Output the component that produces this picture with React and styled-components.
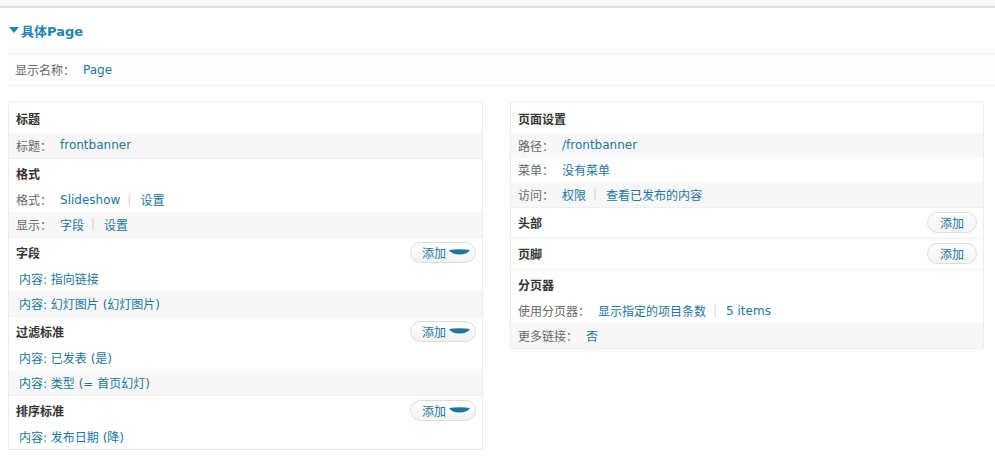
import React from "react";
import styled, { createGlobalStyle } from "styled-components";

const GlobalStyle = createGlobalStyle`
  html, body {
    margin: 0;
    padding: 0;
    background: #fff;
    font-family: "DejaVu Sans", "Noto Sans CJK SC", sans-serif;
    font-size: 12px;
    color: #333;
    overflow: hidden;
  }
`;

const blue = "#21759b";

const Page = styled.div`
  width: 1010px;
`;

const TopStrip = styled.div`
  height: 6px;
  background: #f7f7f7;
  border-bottom: 2px solid #dcdcdc;
`;

const Title = styled.h2`
  display: flex;
  align-items: center;
  gap: 2px;
  margin: 13px 0 14px 9px;
  height: 18px;
  font-size: 13px;
  font-weight: bold;
  color: #2583ad;
`;

const DisplayBox = styled.div`
  margin-left: 8px;
  height: 31px;
  display: flex;
  align-items: center;
  padding-left: 7px;
  border-top: 1px solid #efefef;
  border-bottom: 1px solid #efefef;
  background: #fdfdfd;
`;

const Columns = styled.div`
  display: grid;
  grid-template-columns: 475px 474px;
  column-gap: 27px;
  align-items: start;
  margin: 16px 0 0 8px;
`;

const Panel = styled.div`
  border: 1px solid #ececec;
  border-top-color: #f2f2f2;
`;

const Heading = styled.div`
  height: ${(p) => (p.$tall ? 31 : 30)}px;
  box-sizing: border-box;
  display: flex;
  align-items: center;
  justify-content: space-between;
  padding: ${(p) => (p.$button ? "0 6px 0 7px" : "1px 7px 0 7px")};
  border-top: ${(p) => (p.$first ? "none" : "1px solid #efefef")};
  font-weight: bold;
  color: #333;
`;

const Row = styled.div`
  height: 24.5px;
  display: flex;
  align-items: center;
  padding-left: ${(p) => (p.$indent ? 10 : 7)}px;
  background: ${(p) => (p.$shaded ? "#f7f7f7" : "#fff")};
  white-space: nowrap;
`;

const Label = styled.span`
  color: #666;
  margin-right: 8px;
`;

const Link = styled.span`
  color: ${blue};
`;

const Sep = styled.span`
  color: #d4d4d4;
  margin: 0 9px 0 7px;
`;

const AddButton = styled.button`
  display: inline-flex;
  align-items: center;
  gap: 3px;
  height: 21px;
  width: ${(p) => (p.$menu ? 66 : 50)}px;
  box-sizing: border-box;
  padding: 0 0 0 ${(p) => (p.$menu ? 11 : 12)}px;
  border: 1px solid #dcdcdc;
  border-radius: 11px;
  background: linear-gradient(#ffffff, #f2f2f2);
  font-family: "DejaVu Sans", "Noto Sans CJK SC", sans-serif;
  font-size: 12px;
  font-weight: normal;
  color: ${blue};
  cursor: pointer;
`;

const Caret = () => (
  <svg width="21" height="6" viewBox="0 0 21 6">
    <path d="M0 1 Q10.5 -0.5 21 1 Q18 5.5 10.5 5.5 Q3 5.5 0 1Z" fill={blue} />
  </svg>
);

const TitleArrow = () => (
  <svg width="10" height="6" viewBox="0 0 10 6">
    <path d="M0 0 H10 L5 6Z" fill="#2583ad" />
  </svg>
);

function Add({ menu }) {
  return (
    <AddButton $menu={menu}>
      添加
      {menu && <Caret />}
    </AddButton>
  );
}

export default function App() {
  return (
    <Page>
      <GlobalStyle />
      <TopStrip />
      <Title>
        <TitleArrow />
        具体Page
      </Title>
      <DisplayBox>
        <Label>显示名称：</Label>
        <Link>Page</Link>
      </DisplayBox>

      <Columns>
        <Panel>
          <Heading $first>标题</Heading>
          <Row $shaded>
            <Label>标题：</Label>
            <Link>frontbanner</Link>
          </Row>

          <Heading>格式</Heading>
          <Row>
            <Label>格式：</Label>
            <Link>Slideshow</Link>
            <Sep>|</Sep>
            <Link>设置</Link>
          </Row>
          <Row $shaded>
            <Label>显示：</Label>
            <Link>字段</Link>
            <Sep>|</Sep>
            <Link>设置</Link>
          </Row>

          <Heading $button>
            字段
            <Add menu />
          </Heading>
          <Row $indent>
            <Link>内容: 指向链接</Link>
          </Row>
          <Row $indent $shaded>
            <Link>内容: 幻灯图片 (幻灯图片)</Link>
          </Row>

          <Heading $button>
            过滤标准
            <Add menu />
          </Heading>
          <Row $indent>
            <Link>内容: 已发表 (是)</Link>
          </Row>
          <Row $indent $shaded>
            <Link>内容: 类型 (= 首页幻灯)</Link>
          </Row>

          <Heading $button>
            排序标准
            <Add menu />
          </Heading>
          <Row $indent>
            <Link>内容: 发布日期 (降)</Link>
          </Row>
        </Panel>

        <Panel>
          <Heading $first>页面设置</Heading>
          <Row $shaded>
            <Label>路径：</Label>
            <Link>/frontbanner</Link>
          </Row>
          <Row>
            <Label>菜单：</Label>
            <Link>没有菜单</Link>
          </Row>
          <Row $shaded>
            <Label>访问：</Label>
            <Link>权限</Link>
            <Sep>|</Sep>
            <Link>查看已发布的内容</Link>
          </Row>

          <Heading $button $tall>
            头部
            <Add />
          </Heading>
          <Heading $button $tall>
            页脚
            <Add />
          </Heading>

          <Heading>分页器</Heading>
          <Row>
            <Label>使用分页器：</Label>
            <Link>显示指定的项目条数</Link>
            <Sep>|</Sep>
            <Link>5 items</Link>
          </Row>
          <Row $shaded>
            <Label>更多链接：</Label>
            <Link>否</Link>
          </Row>
        </Panel>
      </Columns>
    </Page>
  );
}
